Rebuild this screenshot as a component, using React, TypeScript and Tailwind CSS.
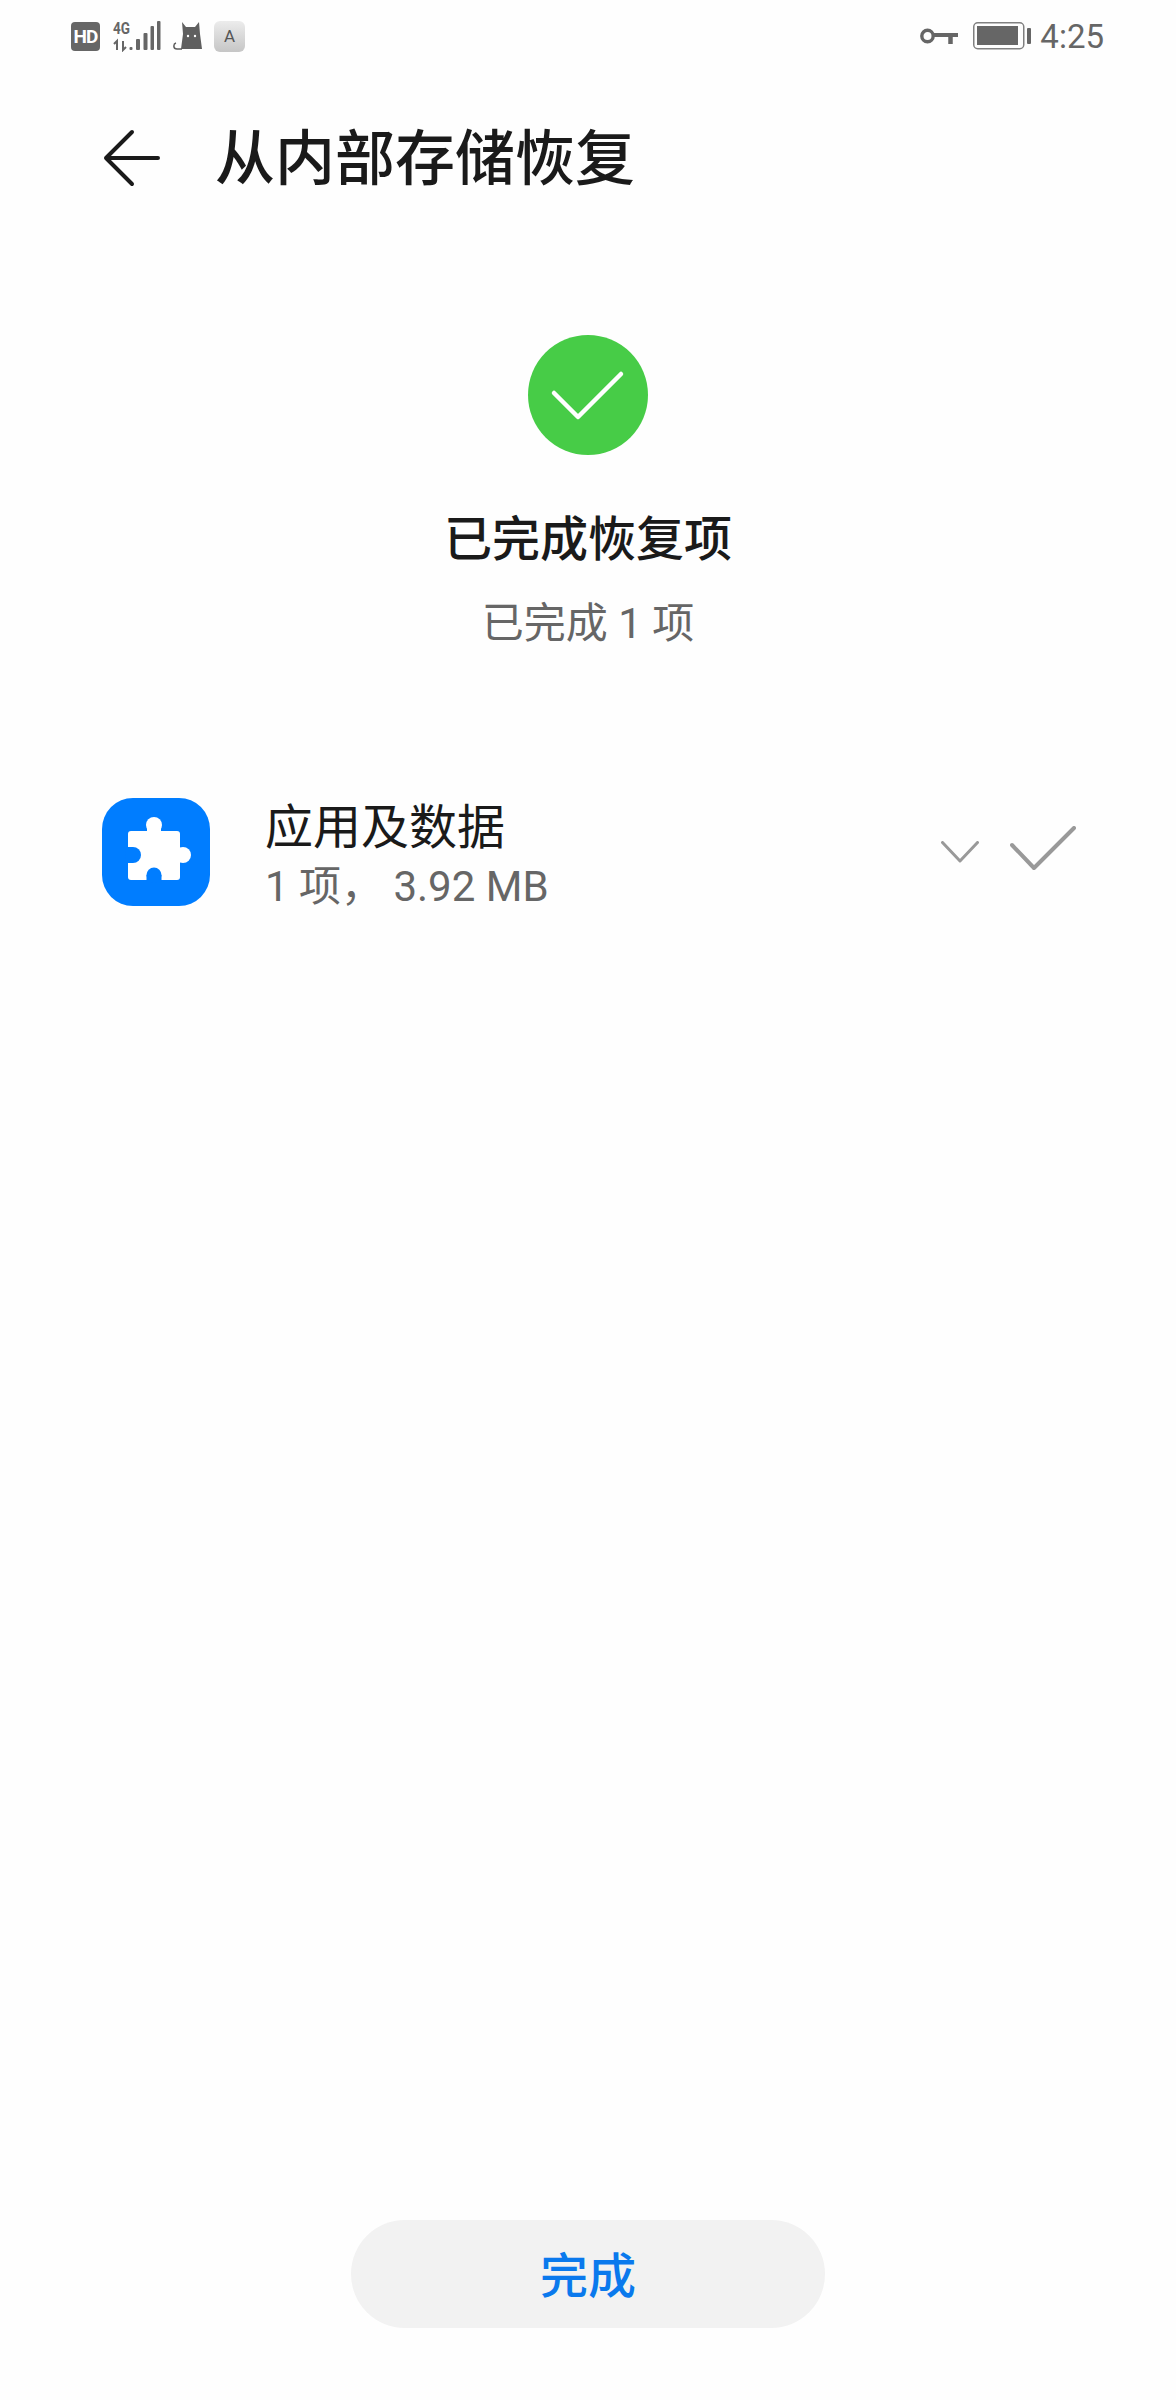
const font = "font-['Roboto','Noto_Sans_CJK_SC',sans-serif]";

function StatusBar() {
  return (
    <div className="flex h-[72px] items-center pl-[71px] pr-[72px]">
      <div className="flex h-[29px] w-[29px] items-center justify-center rounded-[4px] bg-[#666666] text-[19px] font-bold leading-none tracking-[-1px] text-white">
        HD
      </div>
      {/* signal */}
      <svg className="ml-[12px]" width="50" height="32" viewBox="0 0 50 32" fill="#666666">
        <text x="1" y="14" fontSize="16" fontWeight="700" fontFamily="Roboto, sans-serif" textLength="17" lengthAdjust="spacingAndGlyphs">4G</text>
        <rect x="17.5" y="27" width="3" height="3" rx="1" />
        <rect x="24" y="19" width="4" height="11" rx="1" />
        <rect x="31.5" y="13" width="4" height="17" rx="1" />
        <rect x="38.5" y="6" width="3.5" height="24" rx="1" />
        <rect x="45" y="1" width="3.5" height="29" rx="1" />
        <path d="M5 30v-9l-3 3M11 21v9l3-3" stroke="#666666" strokeWidth="2" fill="none" />
      </svg>
      {/* cat */}
      <svg className="ml-[11px]" width="30" height="28" viewBox="0 0 30 28">
        <path d="M9 0l4 5h9l4-5 1 12 2 15H8l2-15z" fill="#5f5f5f" />
        <path d="M9 27H4C0 27 0 22 3 21" stroke="#5f5f5f" strokeWidth="1.5" fill="none" />
        <circle cx="15" cy="14" r="1.2" fill="#fff" />
        <circle cx="22" cy="14" r="1.2" fill="#fff" />
      </svg>
      <div className="ml-[11px] flex h-[31px] w-[31px] items-center justify-center rounded-[6px] bg-gradient-to-b from-[#ececec] to-[#c6c6c6] text-[17px] leading-none text-[#555555]">
        A
      </div>
      <div className="ml-auto flex items-center">
        <svg width="38" height="16" viewBox="0 0 38 16" fill="none" stroke="#666666">
          <circle cx="7.5" cy="8" r="5.7" strokeWidth="3.4" />
          <path d="M13 7h25" strokeWidth="4" />
          <path d="M30.5 7v9" strokeWidth="4.5" />
        </svg>
        <svg className="ml-[15px]" width="58" height="28" viewBox="0 0 58 28" fill="none">
          <rect x="0.75" y="0.75" width="50" height="26" rx="4" stroke="#808080" strokeWidth="1.5" />
          <rect x="4" y="4" width="41" height="19" fill="#666666" />
          <rect x="54" y="6" width="4" height="16" rx="1" fill="#666666" />
        </svg>
        <span className="ml-[9px] text-[33px] leading-none text-[#666666]">4:25</span>
      </div>
    </div>
  );
}

function Puzzle() {
  return (
    <svg width="108" height="108" viewBox="0 0 108 108">
      <rect width="108" height="108" rx="31" fill="#007dff" />
      <rect x="26" y="33" width="52" height="49" rx="3" fill="#fff" />
      <circle cx="52" cy="27" r="8" fill="#fff" />
      <rect x="45" y="27" width="14" height="8" fill="#fff" />
      <circle cx="81" cy="57" r="8" fill="#fff" />
      <circle cx="31" cy="57" r="8" fill="#007dff" />
      <rect x="24" y="49" width="7" height="16" fill="#007dff" />
      <circle cx="52" cy="77" r="7.5" fill="#007dff" />
      <rect x="44.5" y="77" width="15" height="7" fill="#007dff" />
    </svg>
  );
}

export default function App() {
  return (
    <div className={`flex h-[2400px] w-[1176px] flex-col bg-[#fefefe] ${font}`}>
      <StatusBar />

      {/* Header */}
      <div className="flex h-[174px] items-center pl-[103px]">
        <svg className="-mt-[3px]" width="58" height="58" viewBox="0 0 58 58" fill="none" stroke="#1a1a1a" strokeWidth="4" strokeLinecap="round" strokeLinejoin="round">
          <path d="M29 3L3 29l26 26M3 29h52" />
        </svg>
        <h1 className="ml-[54px] mt-[2px] text-[60px] font-medium leading-[72px] text-[#1a1a1a]">从内部存储恢复</h1>
      </div>

      {/* Result */}
      <div className="mt-[89px] flex flex-col items-center">
        <div className="flex h-[120px] w-[120px] items-center justify-center rounded-full bg-[#47cc47]">
          <svg width="120" height="120" viewBox="0 0 120 120" fill="none" stroke="#fff" strokeWidth="4.5" strokeLinecap="round" strokeLinejoin="round">
            <path d="M26 58l24 24 43-43" />
          </svg>
        </div>
        <p className="mt-[53px] text-[48px] font-medium leading-[64px] text-[#1a1a1a]">已完成恢复项</p>
        <p className="mt-[24px] text-[42px] leading-[56px] text-[#666666]">已完成 1 项</p>
      </div>

      {/* Item */}
      <div className="mt-[138px] flex items-center pl-[102px] pr-[100px]">
        <Puzzle />
        <div className="ml-[55px] mt-[6px] flex flex-col">
          <span className="text-[48px] leading-[64px] text-[#1a1a1a]">应用及数据</span>
          <span className="text-[42px] leading-[54px] text-[#666666]">1 项， 3.92 MB</span>
        </div>
        <svg className="ml-auto" width="38" height="22" viewBox="0 0 38 22" fill="none" stroke="#999999" strokeWidth="3" strokeLinecap="round" strokeLinejoin="round">
          <path d="M1.5 1.5L19 20 36.5 1.5" />
        </svg>
        <svg className="-mt-[8px] ml-[31px]" width="66" height="44" viewBox="0 0 66 44" fill="none" stroke="#999999" strokeWidth="4" strokeLinecap="round" strokeLinejoin="round">
          <path d="M2 19l22 23L64 2" />
        </svg>
      </div>

      {/* Done */}
      <div className="mb-[72px] mt-auto flex justify-center">
        <button className="h-[108px] w-[474px] rounded-full bg-[#f2f2f2] pt-[6px] text-[48px] font-medium text-[#0a79ed]">完成</button>
      </div>
    </div>
  );
}
